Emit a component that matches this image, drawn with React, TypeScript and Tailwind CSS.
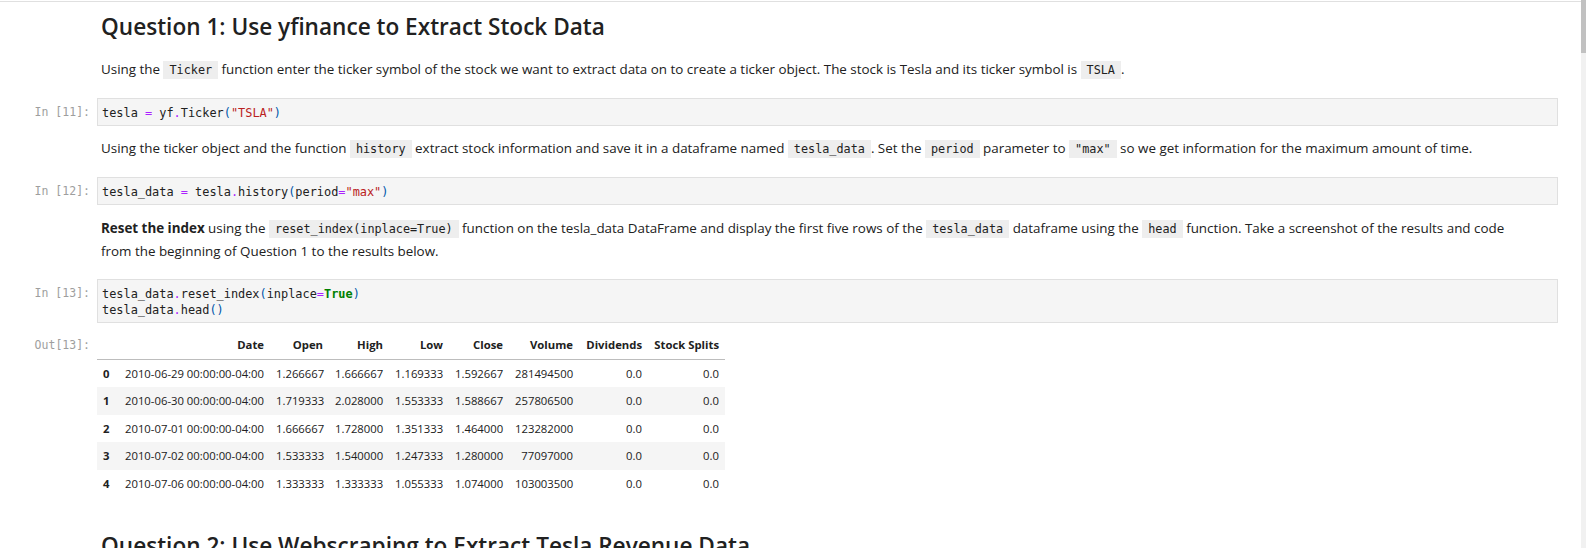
import React from 'react';

const sans = { fontFamily: '"Open Sans", "Noto Sans", sans-serif' };
const mono = { fontFamily: '"DejaVu Sans Mono", "Liberation Mono", monospace' };

const Chip = ({ children }: { children: React.ReactNode }) => (
  <code className="bg-[#eeeeee] px-[6px] py-[2px] text-[11.8px] text-[#212121]" style={mono}>
    {children}
  </code>
);

const Op = ({ children }: { children: React.ReactNode }) => <span className="text-[#aa22ff]">{children}</span>;
const Br = ({ children }: { children: React.ReactNode }) => <span className="text-[#0055aa]">{children}</span>;
const Str = ({ children }: { children: React.ReactNode }) => <span className="text-[#ba2121]">{children}</span>;
const Kw = ({ children }: { children: React.ReactNode }) => <span className="text-[#008000] font-bold">{children}</span>;

const CodeCell = ({ n, children }: { n: number; children: React.ReactNode }) => (
  <div className="flex">
    <div className="w-[97px] shrink-0 pr-[7px] pt-[6px] text-right text-[11.5px] leading-[16px] text-[#9e9e9e]" style={mono}>
      In [{n}]:
    </div>
    <div
      className="flex-1 border border-[#e0e0e0] bg-[#f5f5f5] px-[4px] pt-[6px] pb-[4px] text-[11.9px] leading-[16px] text-[#212121] whitespace-pre"
      style={mono}
    >
      {children}
    </div>
  </div>
);

const Markdown = ({ className, children }: { className?: string; children: React.ReactNode }) => (
  <div className="flex">
    <div className="w-[97px] shrink-0" />
    <div className={`flex-1 pl-[4px] text-[13.4px] leading-[22px] text-[#212121] ${className ?? ''}`}>{children}</div>
  </div>
);

const columns = [
  { label: '', w: 'w-[19px]' },
  { label: 'Date', w: 'w-[154px]' },
  { label: 'Open', w: 'w-[59px]' },
  { label: 'High', w: 'w-[60px]' },
  { label: 'Low', w: 'w-[60px]' },
  { label: 'Close', w: 'w-[60px]' },
  { label: 'Volume', w: 'w-[70px]' },
  { label: 'Dividends', w: 'w-[69px]' },
  { label: 'Stock Splits', w: 'w-[77px]' },
];

const rows = [
  ['2010-06-29 00:00:00-04:00', '1.266667', '1.666667', '1.169333', '1.592667', '281494500', '0.0', '0.0'],
  ['2010-06-30 00:00:00-04:00', '1.719333', '2.028000', '1.553333', '1.588667', '257806500', '0.0', '0.0'],
  ['2010-07-01 00:00:00-04:00', '1.666667', '1.728000', '1.351333', '1.464000', '123282000', '0.0', '0.0'],
  ['2010-07-02 00:00:00-04:00', '1.533333', '1.540000', '1.247333', '1.280000', '77097000', '0.0', '0.0'],
  ['2010-07-06 00:00:00-04:00', '1.333333', '1.333333', '1.055333', '1.074000', '103003500', '0.0', '0.0'],
];

export default function App() {
  return (
    <div className="flex h-[548px] w-full overflow-hidden bg-white" style={sans}>
      <div className="flex-1 min-w-0">
        <div className="mt-[1px] h-[1px] bg-[#e0e0e0]" />

        <div className="pr-[23px]">
          <Markdown className="mt-[9px]">
            <h2 className="text-[22.6px] font-semibold leading-[32px] text-[#212121]">
              Question 1: Use yfinance to Extract Stock Data
            </h2>
          </Markdown>

          <Markdown className="mt-[15px]">
            Using the <Chip>Ticker</Chip> function enter the ticker symbol of the stock we want to extract data on to
            create a ticker object. The stock is Tesla and its ticker symbol is <Chip>TSLA</Chip>.
          </Markdown>

          <div className="mt-[17px]">
            <CodeCell n={11}>
              tesla <Op>=</Op> yf<Op>.</Op>Ticker<Br>(</Br>
              <Str>"TSLA"</Str>
              <Br>)</Br>
            </CodeCell>
          </div>

          <Markdown className="mt-[11px]">
            Using the ticker object and the function <Chip>history</Chip> extract stock information and save it in a
            dataframe named <Chip>tesla_data</Chip>. Set the <Chip>period</Chip> parameter to <Chip>"max"</Chip> so we get
            information for the maximum amount of time.
          </Markdown>

          <div className="mt-[17px]">
            <CodeCell n={12}>
              tesla_data <Op>=</Op> tesla<Op>.</Op>history<Br>(</Br>period<Op>=</Op>
              <Str>"max"</Str>
              <Br>)</Br>
            </CodeCell>
          </div>

          <Markdown className="mt-[12px]">
            <strong className="font-bold">Reset the index</strong> using the <Chip>reset_index(inplace=True)</Chip>{' '}
            function on the tesla_data DataFrame and display the first five rows of the <Chip>tesla_data</Chip> dataframe
            using the <Chip>head</Chip> function. Take a screenshot of the results and code
            <br />
            from the beginning of Question 1 to the results below.
          </Markdown>

          <div className="mt-[17px]">
            <CodeCell n={13}>
              tesla_data<Op>.</Op>reset_index<Br>(</Br>inplace<Op>=</Op>
              <Kw>True</Kw>
              <Br>)</Br>
              {'\n'}tesla_data<Op>.</Op>head<Br>()</Br>
            </CodeCell>
          </div>

          <div className="mt-[8px] flex">
            <div className="w-[97px] shrink-0 pr-[7px] pt-[6px] text-right text-[11.5px] leading-[16px] text-[#9e9e9e]" style={mono}>
              Out[13]:
            </div>
            <div className="flex-1">
              <table className="w-[628px] table-fixed border-collapse text-[11.3px] text-[#212121]">
                <thead className="border-b border-[#bdbdbd]">
                  <tr>
                    {columns.map((c) => (
                      <th key={c.label} className={`${c.w} px-[6px] py-[6px] text-right font-bold leading-[15.5px] whitespace-nowrap`}>
                        {c.label}
                      </th>
                    ))}
                  </tr>
                </thead>
                <tbody>
                  {rows.map((r, i) => (
                    <tr key={i} className={i % 2 === 1 ? 'bg-[#f5f5f5]' : ''}>
                      <th className="px-[6px] py-[6px] text-left font-bold leading-[15.5px]">{i}</th>
                      {r.map((v, j) => (
                        <td key={j} className="px-[6px] py-[6px] text-right leading-[15.5px] whitespace-nowrap">
                          {v}
                        </td>
                      ))}
                    </tr>
                  ))}
                </tbody>
              </table>
            </div>
          </div>

          <Markdown className="mt-[33px]">
            <h2 className="text-[22.6px] font-semibold leading-[32px] text-[#212121]">
              Question 2: Use Webscraping to Extract Tesla Revenue Data
            </h2>
          </Markdown>
        </div>
      </div>

      <div className="w-[5px] shrink-0 bg-[#f1f1f1]">
        <div className="h-[53px] bg-[#c1c1c1]" />
      </div>
    </div>
  );
}
